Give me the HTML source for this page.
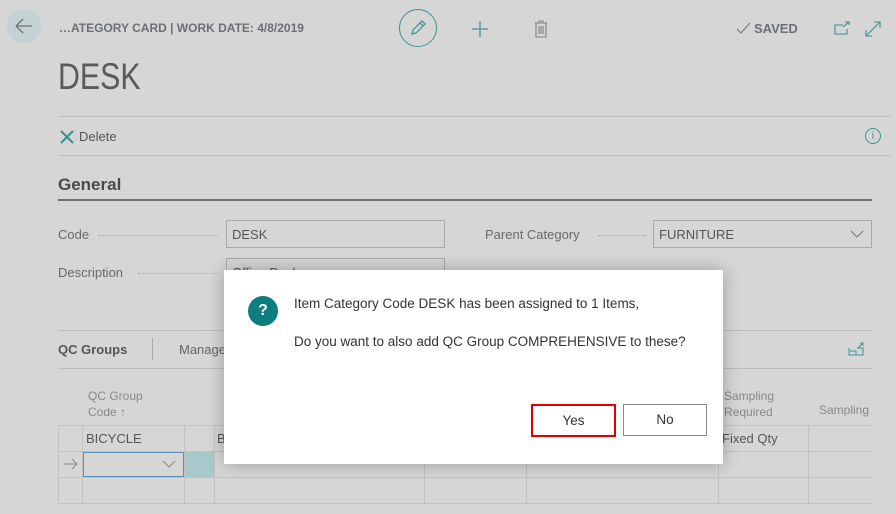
<!DOCTYPE html>
<html><head><style>
*{margin:0;padding:0;box-sizing:border-box}
body{width:896px;height:514px;background:#d6d6d6;font-family:"Liberation Sans",sans-serif;color:#555;position:relative;overflow:hidden;font-size:13px}
.a{position:absolute}
.hl{position:absolute;height:1px;background:#bdbdbd}
.inp{position:absolute;border:1px solid #a9a9a9;height:28px;padding:6px 5px;font-size:13px;color:#555}
.dots{position:absolute;border-bottom:1px dotted #aaa;height:1px}
.vl{position:absolute;width:1px;background:#c3c3c3}
.btn{position:absolute;background:#fff;text-align:center;font-size:13.5px;color:#333;line-height:30px}
</style></head><body>
<div class="a" style="left:7px;top:9px;width:34px;height:34px;border-radius:50%;background:#c3d2d3"></div>
<svg class="a" style="left:14px;top:17px" width="20" height="18"><path d="M2 9H18M2 9L9 2M2 9L9 16" stroke="#707070" stroke-width="1.3" fill="none"/></svg>
<div class="a" style="left:59px;top:21px;font-size:12px;font-weight:bold;color:#6c6f74">…ATEGORY CARD | WORK DATE: 4/8/2019</div>
<div class="a" style="left:399px;top:9px;width:38px;height:38px;border-radius:50%;border:1.3px solid #3a9494"></div>
<svg class="a" style="left:408px;top:18px" width="20" height="20"><path d="M4 16L5 12L14 3L17 6L8 15Z M12 5L15 8" stroke="#3a8f8f" stroke-width="1.2" fill="none"/></svg>
<svg class="a" style="left:470px;top:19px" width="20" height="20"><path d="M10 2V18M2 10H18" stroke="#5a9e9e" stroke-width="1.5"/></svg>
<svg class="a" style="left:533px;top:19px" width="16" height="20"><path d="M2 4H14M6 4V2H10V4M3 4V18H13V4M6 7V15M8 7V15M10 7V15" stroke="#808080" stroke-width="1.1" fill="none"/></svg>
<svg class="a" style="left:736px;top:22px" width="16" height="12"><path d="M1 7L5 11L14 1" stroke="#777" stroke-width="1" fill="none"/></svg>
<div class="a" style="left:754px;top:21px;font-size:13px;font-weight:bold;color:#6c6f74">SAVED</div>
<svg class="a" style="left:834px;top:21px" width="18" height="14"><path d="M9 4H1V13H13V8M9 6L15 1M11 1H15V4" stroke="#3a8f8f" stroke-width="1.1" fill="none"/></svg>
<svg class="a" style="left:864px;top:20px" width="18" height="18"><path d="M2 16L16 2M10 2H16V8M2 10V16H8" stroke="#3a8f8f" stroke-width="1.1" fill="none"/></svg>
<div class="a" style="left:58px;top:56px;font-size:37px;color:#5a5a5a;transform:scaleX(0.82);transform-origin:0 0">DESK</div>
<div class="hl" style="left:58px;top:116px;width:833px"></div>
<svg class="a" style="left:59px;top:129px" width="16" height="16"><path d="M2 2L14 14M14 2L2 14" stroke="#3a8f8f" stroke-width="2"/></svg>
<div class="a" style="left:79px;top:129px;font-size:13px;color:#555">Delete</div>
<div class="a" style="left:865px;top:128px;width:16px;height:16px;border-radius:50%;border:1px solid #3a9494;color:#3a9494;font-size:11px;text-align:center;line-height:14px">i</div>
<div class="hl" style="left:58px;top:155px;width:833px"></div>
<div class="a" style="left:58px;top:175px;font-size:17px;font-weight:bold;color:#4a4a4a">General</div>
<div class="a" style="left:58px;top:199px;width:814px;height:2px;background:#6f7275"></div>
<div class="a" style="left:58px;top:227px;color:#6a6a6a">Code</div>
<div class="dots" style="left:98px;top:235px;width:120px"></div>
<div class="inp" style="left:226px;top:220px;width:219px">DESK</div>
<div class="a" style="left:485px;top:227px;color:#6a6a6a">Parent Category</div>
<div class="dots" style="left:598px;top:235px;width:48px"></div>
<div class="inp" style="left:653px;top:220px;width:219px">FURNITURE</div>
<svg class="a" style="left:850px;top:230px" width="14" height="8"><path d="M1 1L7 7L13 1" stroke="#777" fill="none"/></svg>
<div class="a" style="left:58px;top:265px;color:#6a6a6a">Description</div>
<div class="dots" style="left:138px;top:273px;width:80px"></div>
<div class="inp" style="left:226px;top:258px;width:219px">Office Desk</div>
<div class="hl" style="left:58px;top:330px;width:814px"></div>
<div class="a" style="left:58px;top:342px;font-weight:bold;color:#555">QC Groups</div>
<div class="vl" style="left:152px;top:338px;height:22px;background:#aaa"></div>
<div class="a" style="left:179px;top:342px;color:#666">Manage</div>
<svg class="a" style="left:848px;top:342px" width="16" height="14"><path d="M1 6V13H15V6H9M1 9H8V13M10 6L15 1M12 1H15V4" stroke="#3a9494" stroke-width="1" fill="none"/></svg>
<div class="hl" style="left:58px;top:368px;width:814px"></div>
<div class="a" style="left:88px;top:388px;color:#888;font-size:12px;line-height:16px">QC Group<br>Code ↑</div>
<div class="a" style="left:724px;top:388px;color:#888;font-size:12px;line-height:16px">Sampling<br>Required</div>
<div class="a" style="left:819px;top:403px;color:#888;font-size:12px">Sampling</div>
<div class="a" style="left:58px;top:425px;width:814px;height:79px;border-top:1px solid #c3c3c3;border-bottom:1px solid #c3c3c3"></div>
<div class="hl" style="left:58px;top:451px;width:814px;background:#c3c3c3"></div>
<div class="hl" style="left:58px;top:477px;width:814px;background:#c3c3c3"></div>
<div class="vl" style="left:58px;top:425px;height:79px"></div>
<div class="vl" style="left:82px;top:425px;height:79px"></div>
<div class="vl" style="left:184px;top:425px;height:79px"></div>
<div class="vl" style="left:214px;top:425px;height:79px"></div>
<div class="vl" style="left:424px;top:425px;height:79px"></div>
<div class="vl" style="left:526px;top:425px;height:79px"></div>
<div class="vl" style="left:718px;top:425px;height:79px"></div>
<div class="vl" style="left:808px;top:425px;height:79px"></div>
<div class="a" style="left:86px;top:431px;color:#555">BICYCLE</div>
<div class="a" style="left:217px;top:431px;color:#555">B</div>
<div class="a" style="left:722px;top:431px;color:#555">Fixed Qty</div>
<div class="a" style="left:185px;top:452px;width:29px;height:25px;background:#a8c9ca"></div>
<div class="a" style="left:83px;top:452px;width:101px;height:25px;border:1px solid #5a8fb8"></div>
<svg class="a" style="left:162px;top:460px" width="14" height="8"><path d="M1 1L7 7L13 1" stroke="#888" fill="none"/></svg>
<svg class="a" style="left:63px;top:458px" width="16" height="12"><path d="M1 6H14M9 1L14 6L9 11" stroke="#888" fill="none"/></svg>
<div class="a" style="left:224px;top:270px;width:499px;height:194px;background:#fff;box-shadow:0 0 16px rgba(0,0,0,0.28)"></div>
<div class="a" style="left:248px;top:296px;width:30px;height:30px;border-radius:50%;background:#0e7d80;color:#fff;font-weight:bold;font-size:16px;text-align:center;line-height:30px">?</div>
<div class="a" style="left:294px;top:296px;color:#333;font-size:13.5px">Item Category Code DESK has been assigned to 1 Items,</div>
<div class="a" style="left:294px;top:334px;color:#333;font-size:13.5px">Do you want to also add QC Group COMPREHENSIVE to these?</div>
<div class="btn" style="left:531px;top:404px;width:85px;height:33px;border:2px solid #e00000">Yes</div>
<div class="btn" style="left:623px;top:404px;width:84px;height:32px;border:1px solid #8a8a8a;line-height:30px">No</div>
</body></html>
